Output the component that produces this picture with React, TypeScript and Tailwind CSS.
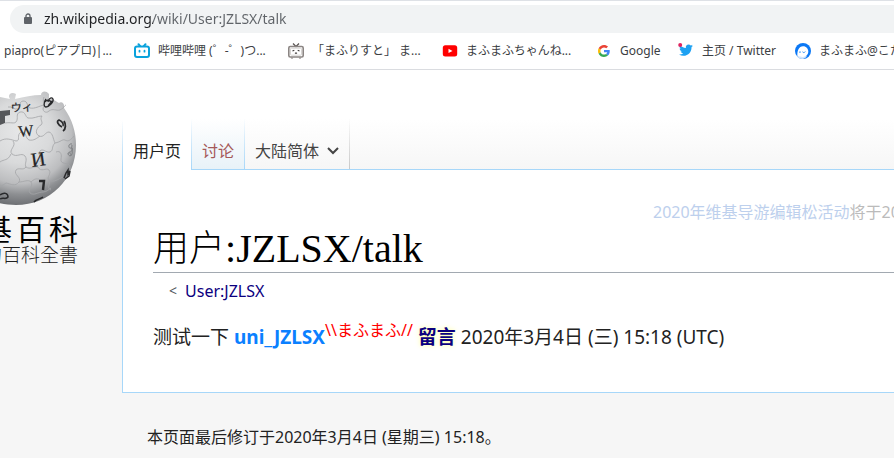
import type { ReactNode } from "react";

const sans = "font-['Noto_Sans','Noto_Sans_CJK_SC',sans-serif]";

function Lock() {
  return (
    <svg viewBox="0 0 8 12" className="h-3 w-2 shrink-0" aria-hidden="true">
      <rect y="4" width="8" height="7" rx="1" fill="#5f6368" />
      <path d="M2 5V3a2 2 0 0 1 4 0v2" fill="none" stroke="#5f6368" strokeWidth="1.3" />
    </svg>
  );
}

function BlueTv() {
  return (
    <svg viewBox="0 0 16 16" className="size-4 shrink-0" aria-hidden="true" fill="none" stroke="#0aa2dc" strokeWidth="2" strokeLinecap="round">
      <path d="M4.5 1.2 6 3M11.5 1.2 10 3" />
      <rect x="1" y="3.5" width="14" height="10.5" rx="2" />
      <path d="M5.5 7.7v1M10.5 7.7v1" strokeWidth="1.8" />
    </svg>
  );
}

function GreyTv() {
  return (
    <svg viewBox="0 0 16 16" className="size-4 shrink-0" aria-hidden="true" fill="none" stroke="#8b8583">
      <path d="M5 .5 8 3.5 11 .5" strokeWidth="1.3" stroke="#5d5755" />
      <rect x=".8" y="3.5" width="14.4" height="10.5" rx="1.5" strokeWidth="1.6" />
      <rect x="2.5" y="5.2" width="11" height="7" rx="1" stroke="#cdc9c7" strokeWidth=".8" />
      <path d="m4.500 8 1.800-.8M11.500 8l-1.800-.8M7 10.500l1-.7 1 .7" stroke="#403c3b" strokeWidth="1.100" />
      <path d="M4 14.500v1.200M12 14.500v1.200" strokeWidth="1.500" />
    </svg>
  );
}

function Youtube() {
  return (
    <svg viewBox="0 0 16 16" className="size-4 shrink-0" aria-hidden="true">
      <rect x=".8" y="2.200" width="14.400" height="11.200" rx="2.500" fill="#f00" />
      <path d="M6.500 5.700v4.400l4-2.200z" fill="#fff" />
    </svg>
  );
}

function GoogleG() {
  return (
    <svg viewBox="0 0 48 48" className="size-3 shrink-0" aria-hidden="true">
      <path fill="#EA4335" d="M24 9.500c3.540 0 6.710 1.220 9.210 3.600l6.850-6.850C35.900 2.380 30.470 0 24 0 14.620 0 6.510 5.380 2.560 13.220l7.980 6.190C12.430 13.720 17.740 9.500 24 9.500z" />
      <path fill="#4285F4" d="M46.980 24.550c0-1.570-.15-3.090-.38-4.550H24v9.020h12.940c-.58 2.960-2.260 5.480-4.780 7.180l7.730 6c4.510-4.180 7.090-10.360 7.090-17.650z" />
      <path fill="#FBBC05" d="M10.530 28.590c-.48-1.450-.76-2.990-.76-4.590s.27-3.140.76-4.590l-7.980-6.190C.92 16.460 0 20.120 0 24s.92 7.540 2.560 10.780z" />
      <path fill="#34A853" d="M24 48c6.480 0 11.930-2.130 15.890-5.810l-7.730-6c-2.150 1.450-4.920 2.300-8.160 2.300-6.260 0-11.570-4.220-13.470-9.910l-7.980 6.190C6.510 42.620 14.620 48 24 48z" />
    </svg>
  );
}

function Bird() {
  return (
    <svg viewBox="0 0 16 16" className="size-4 shrink-0" aria-hidden="true">
      <path transform="translate(1 .2) scale(.58)" fill="#1da1f2" d="M23.950 4.570a10 10 0 0 1-2.820.77 4.960 4.960 0 0 0 2.160-2.720c-.95.55-2 .95-3.130 1.180a4.920 4.920 0 0 0-8.380 4.480C7.690 8.090 4.070 6.130 1.640 3.160a4.820 4.820 0 0 0-.67 2.480c0 1.710.87 3.210 2.190 4.100a4.900 4.900 0 0 1-2.230-.62v.06a4.920 4.920 0 0 0 3.950 4.830 5 5 0 0 1-2.210.08 4.940 4.940 0 0 0 4.600 3.420A9.870 9.870 0 0 1 0 19.540a13.990 13.990 0 0 0 7.550 2.210c9.050 0 14-7.500 14-13.980 0-.21 0-.42-.02-.63a9.940 9.940 0 0 0 2.460-2.550z" />
      <circle cx="2.200" cy="2" r="2" fill="#e0245e" />
    </svg>
  );
}

function BlueRing() {
  return (
    <svg viewBox="0 0 16 16" className="size-4 shrink-0" aria-hidden="true">
      <circle cx="8" cy="8" r="8" fill="#0b78f5" />
      <path d="M8 3.200c3.500 0 5.300 2.700 5.300 5.300 0 2-1 3.500-2 4.300l-.8 1.500L6 15.300l-3.500-2C1.800 8 4 3.200 8 3.200z" fill="#fff" />
      <path d="M4 9.500c.8-.8 1.600-.5 2 0M7.500 8.800c.8 1 2 1 2.800-.2" stroke="#2b8df7" strokeWidth="1" fill="none" />
      <path d="M1 11.500c1.500 2 3 2.300 4.500 2 2 .8 3.500.5 5-.8l1.500 1-4 2.300c-3 0-6-1.500-7-4.500z" fill="#cfe4fd" />
    </svg>
  );
}

function Bookmark({ icon, children, className }: { icon?: ReactNode; children: ReactNode; className: string }) {
  return (
    <a href="#" className={`flex shrink-0 items-center gap-2 whitespace-nowrap ${className}`}>
      {icon}
      <span>{children}</span>
    </a>
  );
}

function Globe() {
  return (
    <svg viewBox="0 0 80 120" className="h-30 w-20" role="img" aria-label="维基百科">
      <defs>
        <radialGradient id="ball" gradientUnits="userSpaceOnUse" cx="20" cy="42" r="78">
          <stop offset="0" stopColor="#e6e7e8" />
          <stop offset=".4" stopColor="#d9dadb" />
          <stop offset=".66" stopColor="#bcbdbf" />
          <stop offset=".8" stopColor="#8d8f92" />
          <stop offset="1" stopColor="#606266" />
        </radialGradient>
      </defs>
      <path fill="url(#ball)" d="M-45 59C-45 30-22 8 0 7L10 9c-3-4 1-8 6-5l-1 5c9-2 18-4 26-4 0-4 5-5 8-1l0 4c5 1 6 3 10 5 3-2 6 1 5 5 8 11 12 24 12 37 0 34-26 60-60 60S-45 93-45 59z" />
      <path d="M0 21l10-1v5l-5 1v7l-5 2z" fill="#55575a" />
      <g fill="none" stroke="#a3a5a7" strokeWidth=".8">
        <path d="M8 17c4-1 6 3 10 2 4-2 0-7 5-8 6 0 3 6 7 7 5 1 9-2 14-3" />
        <path d="M44 7c-2 5 1 6 0 9-3 5 2 8 5 5 4-3 7 0 11-1 4-2 4-4 6-5" />
        <path d="M5 33c6-1 9 1 11-1 3-4-1-8 4-10 6-1 5 5 8 6 6 1 9-2 14-2" />
        <path d="M42 26c-3 4 2 6-1 9-4 2-7 8-2 11 5 2 6-4 10-4 4 1 4 7 6 11" />
        <path d="M0 51c6-4 12-1 16 0 5 0 0-6 5-9 6 0 4 6 8 8 5 1 8-2 11-4" />
        <path d="M55 53c-4 4-1 7-5 9-4 1-7-4-10-1-3 4 3 7 0 11" />
        <path d="M13 51c4 5-5 9-1 13 5 4 9-2 13 2 3 4-1 8 1 11 4 3 8-1 12 0" />
        <path d="M55 53c6-1 7-4 10-3 3 2 6 0 9-4" />
        <path d="M56 62c5-2 6 3 5 7-1 6 7 3 9 7 1 4-2 8-3 12" />
        <path d="M26 77c-3 4-7 0-10 3-3 5 6 7 3 12-4 5-8 2-13 1l-6 4" />
        <path d="M38 77c3 6 8 0 11 3 3 4-3 7 0 10 5 3 9-1 14-3" />
        <path d="M19 92c5 0 9-3 12 0 3 5-4 7-1 11 4 3 8-1 13-1 4 0 6-3 8-4" />
        <path d="M0 72c4-3 8-1 11-8M31 92c4-4 6-3 8-3M49 90c2 4-3 8 2 10" />
      </g>
      <g fill="#242527" fontFamily="Liberation Serif, Noto Sans CJK JP, serif" stroke="#242527" strokeWidth=".2">
        <text x="19" y="47" fontSize="16" transform="rotate(-6 19 47)">W</text>
        <text x="32" y="77" fontSize="20" transform="rotate(-8 32 77)">И</text>
        <text x="11" y="22" fontSize="11" transform="rotate(-4 11 22)">ウィ</text>
      </g>
      <g fill="none" stroke="#292a2c">
        <path d="M39 91h5l-1 9" strokeWidth="2.400" />
        <path d="M62 37c-4-2-6-6-3-7 3 1 5 4 4 6M64 31c2 3 2 8-1 10" strokeWidth="1.800" />
        <path d="M46 9c-3 4-2 8 0 8 3 0 8-5 7-8-2-3-5 1-5 3M45 12c2-3 5-2 7 1M48 16l4-5" strokeWidth="1.300" />
        <path d="m64 88 2-5 2-3v4l2-3-1 5-4 3" strokeWidth="1.500" />
        <path d="M34 112c2-3 7-3 9-5M0 105c4-3 8-2 8 2-2 3-5 0-8 2" strokeWidth="1.500" />
        <path d="M72 54c-4-1-4 5-1 4s1 5-2 4M72 55c-1 4 1 6 0 9-1 3-4 2-4-1 2-1 3 1 3 3" stroke="#7d7f82" />
      </g>
    </svg>
  );
}

export default function App() {
  return (
    <div className={`overflow-hidden bg-[#f6f6f6] text-[#222] ${sans}`}>
      <header className="border-b border-[#dadce0] bg-white">
        <div className="border-t border-[#dee1e6] pt-1 pl-2.5">
          <div className="flex h-7 items-center gap-3 rounded-l-full bg-[#f1f3f4] pl-3.5">
            <Lock />
            <input
              aria-label="地址"
              defaultValue="zh.wikipedia.org/wiki/User:JZLSX/talk"
              className="min-w-0 flex-1 bg-[linear-gradient(to_right,#202124_109px,#5f6368_109px)] bg-clip-text text-sm text-transparent outline-none"
            />
          </div>
        </div>
        <nav className="flex h-9 items-center pl-1 text-xs text-[#3c4043]">
          <Bookmark className="w-[130px]">piapro(ピアプロ)|...</Bookmark>
          <Bookmark className="w-[154px]" icon={<BlueTv />}>哔哩哔哩 (゜-゜)つ...</Bookmark>
          <Bookmark className="w-[154px]" icon={<GreyTv />}>「まふりすと」 ま...</Bookmark>
          <Bookmark className="w-[156px]" icon={<Youtube />}>まふまふちゃんね...</Bookmark>
          <Bookmark className="w-[80px]" icon={<GoogleG />}><span className="pl-0.5">Google</span></Bookmark>
          <Bookmark className="w-[117px]" icon={<Bird />}>主页 / Twitter</Bookmark>
          <Bookmark className="w-[150px]" icon={<BlueRing />}>まふまふ@こた</Bookmark>
        </nav>
      </header>

      <div className="flex bg-[linear-gradient(#fff_50px,#f6f6f6_100px)]">
        <aside className="w-[122px] shrink-0 pt-5">
          <Globe />
          <div className="flex w-[78px] flex-col items-end overflow-hidden pt-0.5 font-['Noto_Sans_CJK_TC',sans-serif] whitespace-nowrap text-black">
            <p className="flex gap-1 text-[29px] leading-8">
              <span>基</span><span>百</span><span>科</span>
            </p>
            <p className="text-[19px] leading-5 font-light text-[#222]">的百科全書</p>
          </div>
        </aside>

        <div className="min-w-0 flex-1">
          <nav className="flex h-[99px] items-end text-base leading-6">
            <div className="w-px self-stretch bg-[linear-gradient(transparent_50px,#a7d7f9)]" />
            <div className="flex h-[50px] flex-1">
              <a href="#" className="z-10 -mb-px h-[51px] bg-white px-2.5 pt-5 text-[#222]">用户页</a>
              <a href="#" className="border-x bg-linear-to-b from-white to-[#e8f2f8] px-2.5 pt-5 text-[#a55858] [border-image:linear-gradient(transparent,#a7d7f9)_1]">讨论</a>
              <button className="flex items-start gap-2 border-r bg-linear-to-b from-white to-[#f6f6f6] px-2.5 pt-5 text-[#444] [border-image:linear-gradient(transparent,#c8c8c8)_1]">
                大陆简体
                <svg viewBox="0 0 12 8" className="mt-2 h-2 w-3" fill="none" stroke="#444" strokeWidth="2" aria-hidden="true"><path d="m1 1 5 5 5-5" /></svg>
              </button>
            </div>
          </nav>
          <main className="h-56 border border-r-0 border-[#a7d7f9] bg-white pl-[30px]">
            <p className="ml-[500px] pt-7 text-base leading-7 whitespace-nowrap text-[#bbb]">
              <a href="#" className="text-[#bdd0ed]">2020年维基导游编辑松活动</a>将于2020
            </p>
            <h1 className="flex h-[47px] items-center border-b border-[#a2a9b1] font-['Liberation_Serif','Noto_Sans_CJK_SC',serif] text-[40px] leading-none text-black">
              <span className="text-4xl leading-none font-light">用户</span>:JZLSX/talk
            </h1>
            <p className="flex gap-2 pt-1.5 pl-4 text-base leading-6 text-[#54595d]">
              <span className="text-sm leading-6">&lt;</span>
              <a href="#" className="text-[#0b0080]">User:JZLSX</a>
            </p>
            <p className="pt-[18px] text-[19px] leading-8 whitespace-nowrap">
              测试一下 <a href="#" className="font-bold text-[#0b80ff]">uni_JZLSX</a>
              <sup className="text-base leading-none text-[#f00]">\\まふまふ//</sup>{" "}
              <a href="#" className="font-bold text-[#0b0080] [text-shadow:0_0_5px_#ffff99]">留言</a> 2020年3月4日 (三) 15:18 (UTC)
            </p>
          </main>
        </div>
      </div>

      <footer className="bg-[#f6f6f6] pt-8 pb-3 pl-[147px] text-base leading-6">本页面最后修订于2020年3月4日 (星期三) 15:18。</footer>
    </div>
  );
}
